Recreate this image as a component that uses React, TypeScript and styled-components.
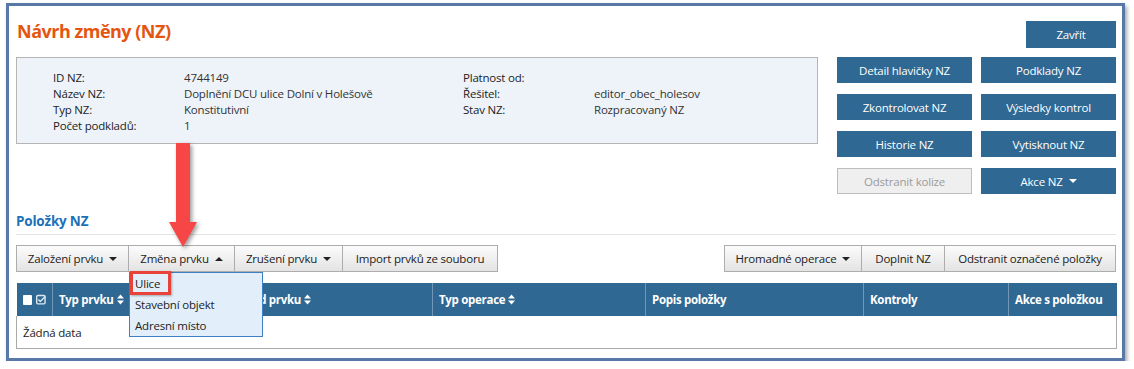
import React from 'react'
import styled, { createGlobalStyle } from 'styled-components'

const GlobalStyle = createGlobalStyle`
  html, body {
    margin: 0;
    padding: 0;
    background: #fff;
  }
  body {
    font-family: "Open Sans", "Noto Sans", sans-serif;
    font-size: 11.5px;
    letter-spacing: -0.2px;
    color: #222;
  }
  button {
    letter-spacing: inherit;
  }
`

const infoLeft = [
  ['ID NZ:', '4744149'],
  ['Název NZ:', 'Doplnění DCU ulice Dolní v Holešově'],
  ['Typ NZ:', 'Konstitutivní'],
  ['Počet podkladů:', '1'],
]

const infoRight = [
  ['Platnost od:', ''],
  ['Řešitel:', 'editor_obec_holesov'],
  ['Stav NZ:', 'Rozpracovaný NZ'],
]

const columns = [
  { title: 'Typ prvku', width: 186, sort: true },
  { title: 'Kód prvku', width: 194, sort: true },
  { title: 'Typ operace', width: 213, sort: true },
  { title: 'Popis položky', width: 218, sort: false },
  { title: 'Kontroly', width: 145, sort: false },
  { title: 'Akce s položkou', width: 108, sort: false },
]

const SortIcon = () => (
  <SortSvg width="7" height="11" viewBox="0 0 7 11">
    <path d="M0 4.6 L3.5 0.4 L7 4.6 Z" fill="currentColor" />
    <path d="M0 6.4 L7 6.4 L3.5 10.6 Z" fill="currentColor" />
  </SortSvg>
)

const CheckSquare = () => (
  <svg width="11" height="11" viewBox="0 0 11 11">
    <rect x="0.75" y="1.25" width="9" height="9" rx="1.2" fill="none" stroke="#dce7f2" strokeWidth="1.5" />
    <path d="M2.6 5.6 L4.6 7.6 L10 2.2" fill="none" stroke="#dce7f2" strokeWidth="1.6" />
  </svg>
)

const App = () => {
  return (
    <>
      <GlobalStyle />
      <Frame>
        <Top>
          <Title>Návrh změny (NZ)</Title>
          <CloseButton>Zavřít</CloseButton>
          <InfoBox>
            <InfoCol>
              {infoLeft.map(([label, value]) => (
                <React.Fragment key={label}>
                  <Label>{label}</Label>
                  <Value>{value}</Value>
                </React.Fragment>
              ))}
            </InfoCol>
            <InfoCol>
              {infoRight.map(([label, value]) => (
                <React.Fragment key={label}>
                  <Label>{label}</Label>
                  <Value>{value}</Value>
                </React.Fragment>
              ))}
            </InfoCol>
          </InfoBox>
          <ActionGrid>
            <ActionButton>Detail hlavičky NZ</ActionButton>
            <ActionButton>Podklady NZ</ActionButton>
            <ActionButton>Zkontrolovat NZ</ActionButton>
            <ActionButton>Výsledky kontrol</ActionButton>
            <ActionButton>Historie NZ</ActionButton>
            <ActionButton>Vytisknout NZ</ActionButton>
            <ActionButton $disabled>Odstranit kolize</ActionButton>
            <ActionButton>
              Akce NZ <Caret />
            </ActionButton>
          </ActionGrid>
        </Top>

        <SectionTitle>Položky NZ</SectionTitle>

        <Toolbar>
          <Group>
            <ToolButton $w={113}>
              Založení prvku <Caret />
            </ToolButton>
            <MenuHolder>
              <ToolButton $w={107}>
                Změna prvku <Caret $up />
              </ToolButton>
              <Menu>
                <MenuItem>
                  Ulice
                  <Highlight />
                </MenuItem>
                <MenuItem>Stavební objekt</MenuItem>
                <MenuItem>Adresní místo</MenuItem>
              </Menu>
            </MenuHolder>
            <ToolButton $w={109}>
              Zrušení prvku <Caret />
            </ToolButton>
            <ToolButton $w={156}>Import prvků ze souboru</ToolButton>
          </Group>
          <Group>
            <ToolButton $w={138}>
              Hromadné operace <Caret />
            </ToolButton>
            <ToolButton $w={84}>Doplnit NZ</ToolButton>
            <ToolButton $w={172}>Odstranit označené položky</ToolButton>
          </Group>
        </Toolbar>

        <Table>
          <colgroup>
            <col style={{ width: 36 }} />
            {columns.map((c) => (
              <col key={c.title} style={{ width: c.width }} />
            ))}
          </colgroup>
          <thead>
            <tr>
              <Th>
                <Checks>
                  <Box />
                  <CheckSquare />
                </Checks>
              </Th>
              {columns.map((c) => (
                <Th key={c.title}>
                  {c.title}
                  {c.sort && <SortIcon />}
                </Th>
              ))}
            </tr>
          </thead>
          <tbody>
            <tr>
              <Td colSpan={7}>Žádná data</Td>
            </tr>
          </tbody>
        </Table>

        <Arrow width="40" height="112" viewBox="0 0 40 112">
          <rect x="10" y="3" width="14" height="82" fill="#f64646" />
          <polygon points="3,82 31,82 17,107" fill="#f64646" />
        </Arrow>
      </Frame>
    </>
  )
}

export default App

const Frame = styled.div`
  position: relative;
  box-sizing: border-box;
  margin: 3px 0 0 6px;
  width: 1119px;
  height: 358px;
  border: 3px solid #5878a8;
  box-shadow: 2px 3px 4px rgba(0, 0, 0, 0.35);
  padding: 15px 6px 0 7px;
  background: #fff;
`

const Top = styled.div`
  display: grid;
  grid-template-columns: 802px 279px;
  grid-template-rows: 27px auto;
  column-gap: 19px;
  row-gap: 9px;
`

const Title = styled.h1`
  margin: 0;
  padding-left: 1px;
  font-size: 18px;
  letter-spacing: -0.5px;
  line-height: 20px;
  font-weight: 700;
  color: #e4560f;
  align-self: start;
`

const CloseButton = styled.button`
  justify-self: end;
  width: 90px;
  height: 27px;
  border: none;
  background: #2e6893;
  color: #fff;
  font-family: inherit;
  font-size: 11.5px;
  padding: 0;
`

const InfoBox = styled.div`
  box-sizing: border-box;
  height: 87px;
  border: 1px solid #b5b5b5;
  background: #eef3fa;
  padding: 12px 0 0 36px;
  display: grid;
  grid-template-columns: 410px 1fr;
  align-items: start;
`

const InfoCol = styled.div`
  display: grid;
  grid-template-columns: 131px 1fr;
  line-height: 16px;
`

const Label = styled.div`
  color: #1c1c1c;
`

const Value = styled.div`
  color: #333;
`

const ActionGrid = styled.div`
  display: grid;
  grid-template-columns: 135px 135px;
  grid-auto-rows: 26px;
  column-gap: 9px;
  row-gap: 11px;
  align-content: start;
`

const ActionButton = styled.button<{ $disabled?: boolean }>`
  box-sizing: border-box;
  border: ${(p) => (p.$disabled ? '1px solid #bdbdbd' : 'none')};
  background: ${(p) => (p.$disabled ? '#efefef' : '#2e6893')};
  color: ${(p) => (p.$disabled ? '#9b9b9b' : '#fff')};
  font-family: inherit;
  font-size: 11.5px;
  padding: 0;
  display: flex;
  align-items: center;
  justify-content: center;
  gap: 4px;
`

const Caret = styled.span<{ $up?: boolean }>`
  display: inline-block;
  width: 0;
  height: 0;
  border-left: 4px solid transparent;
  border-right: 4px solid transparent;
  ${(p) => (p.$up ? 'border-bottom: 4px solid currentColor;' : 'border-top: 4px solid currentColor;')}
  margin-left: 2px;
`

const SectionTitle = styled.h2`
  margin: 18px 0 0;
  padding: 0 0 4px;
  font-size: 13.5px;
  letter-spacing: -0.2px;
  line-height: 18px;
  font-weight: 700;
  color: #1d71b8;
  border-bottom: 1px solid #e3e3e3;
`

const Toolbar = styled.div`
  display: flex;
  justify-content: space-between;
  margin-top: 10px;
`

const Group = styled.div`
  display: flex;
`

const MenuHolder = styled.div`
  position: relative;
  display: flex;
  margin-left: -1px;
`

const ToolButton = styled.button<{ $w: number }>`
  box-sizing: border-box;
  width: ${(p) => p.$w}px;
  height: 27px;
  border: 1px solid #adadad;
  background: linear-gradient(#fcfcfc, #e3e3e3);
  color: #222;
  font-family: inherit;
  font-size: 11.5px;
  padding: 0;
  display: flex;
  align-items: center;
  justify-content: center;
  gap: 4px;
  & + & {
    margin-left: -1px;
  }
  ${MenuHolder} + & {
    margin-left: -1px;
  }
`

const Menu = styled.div`
  position: absolute;
  z-index: 2;
  top: 100%;
  left: 1px;
  box-sizing: border-box;
  width: 134px;
  border: 1px solid #3f80c2;
  background: #e2effa;
`

const MenuItem = styled.div`
  position: relative;
  padding: 0 5px;
  line-height: 21px;
  color: #222;
`

const Highlight = styled.span`
  position: absolute;
  left: 0;
  top: -2px;
  width: 41px;
  height: 24px;
  box-sizing: border-box;
  border: 3px solid #e8433b;
  box-shadow: 1px 1px 2px rgba(0, 0, 0, 0.3);
`

const Table = styled.table`
  margin-top: 11px;
  width: 1100px;
  table-layout: fixed;
  border-collapse: collapse;
`

const Th = styled.th`
  height: 33px;
  padding: 0 6px;
  background: #2e6893;
  color: #fff;
  font-size: 11.5px;
  letter-spacing: -0.3px;
  font-weight: 700;
  text-align: left;
  white-space: nowrap;
  border-right: 1px solid #7196b8;
  &:last-child {
    border-right: none;
  }
`

const SortSvg = styled.svg`
  margin-left: 3px;
  vertical-align: -1px;
`

const Checks = styled.div`
  display: flex;
  align-items: center;
  gap: 4px;
`

const Box = styled.span`
  display: inline-block;
  width: 10px;
  height: 10px;
  background: #fff;
  border-radius: 1px;
`

const Td = styled.td`
  height: 32px;
  padding: 0 6px;
  color: #222;
  border: 1px solid #aaa;
  border-top: none;
`

const Arrow = styled.svg`
  position: absolute;
  left: 157px;
  top: 134px;
  filter: drop-shadow(2px 2px 2px rgba(0, 0, 0, 0.4));
`
